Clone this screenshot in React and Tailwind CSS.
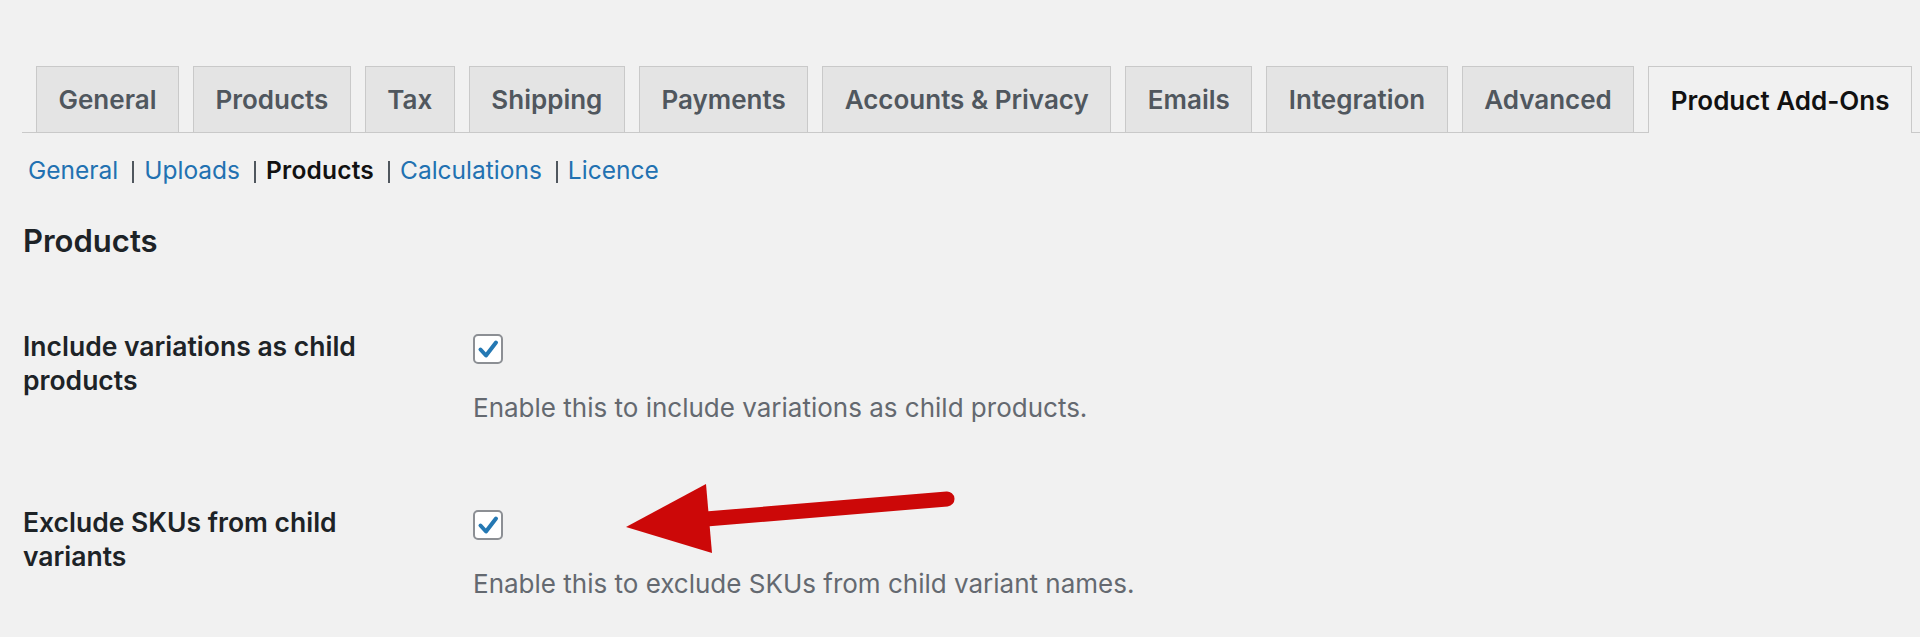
const TABS = [
    'General',
    'Products',
    'Tax',
    'Shipping',
    'Payments',
    'Accounts & Privacy',
    'Emails',
    'Integration',
    'Advanced',
    'Product Add-Ons',
];

const SUBNAV = ['General', 'Uploads', 'Products', 'Calculations', 'Licence'];

const ROWS = [
    {
        label: 'Include variations as child products',
        desc: 'Enable this to include variations as child products.',
    },
    {
        label: 'Exclude SKUs from child variants',
        desc: 'Enable this to exclude SKUs from child variant names.',
    },
];

function Checkbox() {
    return (
        <span className="flex items-center justify-center w-[30px] h-[30px] bg-white border-2 border-[#8c8f94] rounded-[5px]">
            <svg viewBox="0 0 26 26" className="w-[26px] h-[26px]">
                <path
                    d="M5.5 13.5l5.5 6L21 6.5"
                    fill="none"
                    stroke="#2478b3"
                    strokeWidth={4}
                    strokeLinecap="round"
                    strokeLinejoin="round"
                />
            </svg>
        </span>
    );
}

export default function App() {
    const active = 'Product Add-Ons';

    return (
        <div
            className="relative h-[637px] bg-[#f1f1f1] pl-[22px] pt-[66px] overflow-hidden"
            style={{ fontFamily: 'Inter, "Liberation Sans", Arial, sans-serif' }}>
            <nav className="flex border-b border-[#c9c9c9]">
                {TABS.map((t) => (
                    <div
                        key={t}
                        className={
                            t === active
                                ? 'ml-[14px] -mb-px h-[67px] px-[21.5px] flex items-center border border-[#c9c9c9] border-b-0 bg-[#f1f1f1] text-[26px] font-semibold text-[#111111] whitespace-nowrap'
                                : 'ml-[14px] h-[66px] px-[21.5px] flex items-center border border-[#c9c9c9] border-b-0 bg-[#e4e4e4] text-[26px] font-semibold text-[#50575e] whitespace-nowrap'
                        }>
                        {t}
                    </div>
                ))}
            </nav>

            <div className="flex items-center mt-[20px] pl-[6px] text-[24.5px] leading-[34px]">
                {SUBNAV.map((s, i) => (
                    <span key={s} className="flex items-center">
                        {i > 0 && (
                            <span className="ml-[14px] mr-[10px] mt-[3px] w-[2px] h-[22px] bg-[#50575e]" />
                        )}
                        <span
                            className={
                                s === 'Products'
                                    ? 'font-semibold text-[#111111] tracking-[0.2px]'
                                    : 'text-[#2271b1]'
                            }>
                            {s}
                        </span>
                    </span>
                ))}
            </div>

            <h2 className="mt-[36px] pl-[1px] text-[31px] leading-[36px] font-semibold text-[#1d2327]">
                Products
            </h2>

            <div className="mt-[70px] flex flex-col gap-[80px]">
                {ROWS.map((r) => (
                    <div key={r.label} className="flex">
                        <div className="w-[451px] shrink-0 pl-[1px]">
                            <div className="max-w-[380px] text-[26.5px] leading-[34px] font-semibold text-[#1d2327]">
                                {r.label}
                            </div>
                        </div>
                        <div>
                            <div className="mt-[5px]">
                                <Checkbox />
                            </div>
                            <p className="mt-[27px] text-[26px] leading-[34px] text-[#646970]">
                                {r.desc}
                            </p>
                        </div>
                    </div>
                ))}
            </div>

            <svg
                className="absolute inset-0 w-[1920px] h-[637px] pointer-events-none"
                viewBox="0 0 1920 637">
                <line
                    x1="706"
                    y1="519"
                    x2="947"
                    y2="499"
                    stroke="#cc0808"
                    strokeWidth={15}
                    strokeLinecap="round"
                />
                <polygon points="626,527 706,484 712,553" fill="#cc0808" />
            </svg>
        </div>
    );
}
